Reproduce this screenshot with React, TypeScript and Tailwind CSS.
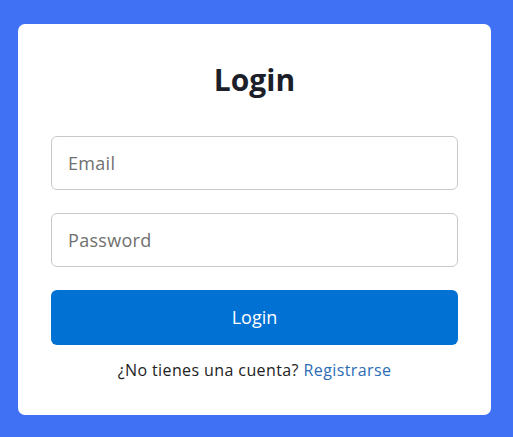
import React from 'react'

const App = () => {
  return (
    <div className="min-h-[437px] w-full bg-[#4070f4] pt-[24px] pl-[18px]" style={{ fontFamily: '"Open Sans", sans-serif' }}>
      <div className="w-[473px] h-[391px] bg-white rounded-[7px] px-[33px] pt-[33px]">
        <h1 className="h-[45px] leading-[45px] text-center text-[30px] font-bold text-[#1c1f2a] mb-[34px]">Login</h1>
        <form className="flex flex-col gap-[23px]">
          <input
            type="text"
            placeholder="Email"
            className="h-[54px] w-full rounded-[6px] border border-[#c9c9c9] px-[16px] text-[18px] tracking-[0.3px] text-[#333] placeholder:text-[#707070] outline-none"
          />
          <input
            type="password"
            placeholder="Password"
            className="h-[54px] w-full rounded-[6px] border border-[#c9c9c9] px-[16px] text-[18px] tracking-[0.3px] text-[#333] placeholder:text-[#707070] outline-none"
          />
          <button type="button" className="h-[55px] w-full rounded-[6px] bg-[#0171d3] text-white text-[18px] font-medium">
            Login
          </button>
        </form>
        <p className="mt-[13px] h-[24px] leading-[24px] text-center text-[16px] tracking-[0.4px] text-[#222]">
          ¿No tienes una cuenta? <a href="#" className="text-[#2d6db5]">Registrarse</a>
        </p>
      </div>
    </div>
  )
}

export default App
